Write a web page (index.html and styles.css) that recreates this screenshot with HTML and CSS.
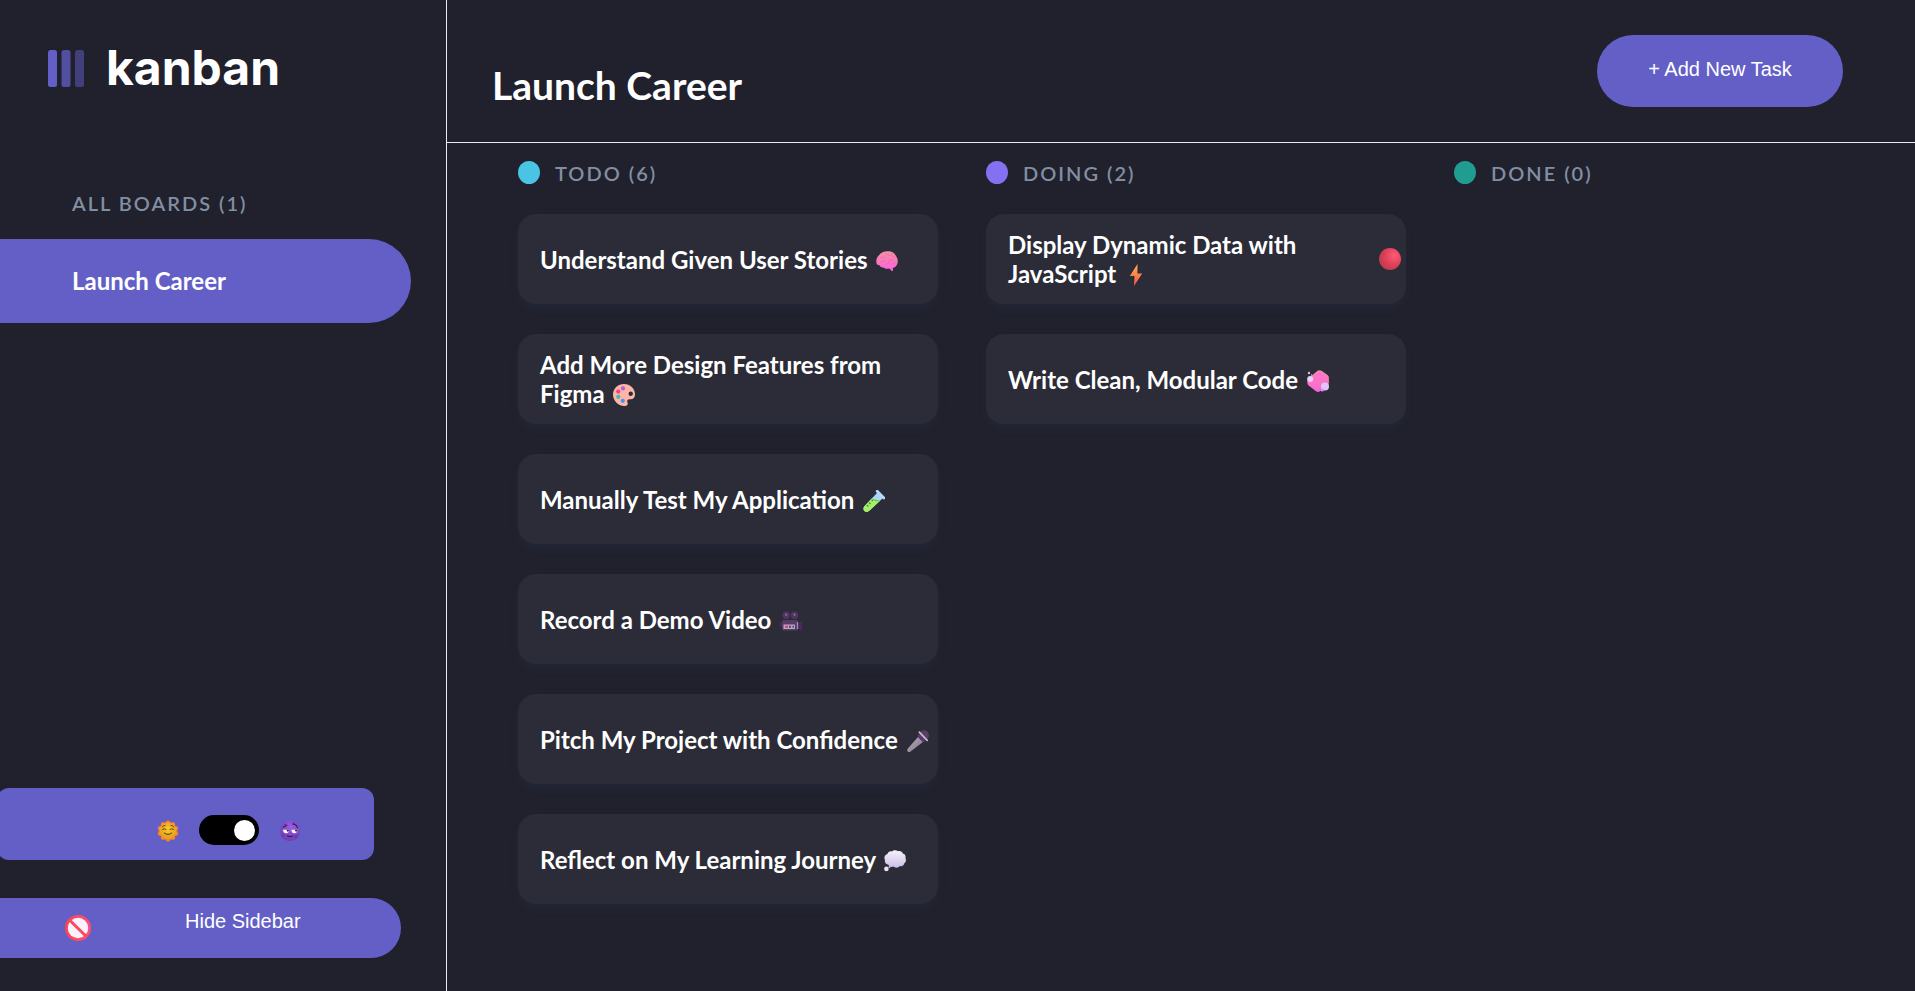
FILE: index.html
```html
<!DOCTYPE html>
<html lang="en">
<head>
<meta charset="utf-8">
<meta name="viewport" content="width=device-width, initial-scale=1">
<title>Kanban - Launch Career</title>
<link rel="stylesheet" href="styles.css">
</head>
<body>
<div class="app">
  <aside class="sidebar">
    <div class="logo">
      <svg class="logo-mark" viewBox="0 0 36 37" aria-hidden="true">
        <g fill="#635fc7">
          <rect width="9" height="37" rx="2.5"/>
          <rect x="13.500" width="9" height="37" rx="2.500" opacity=".75"/>
          <rect x="27" width="9" height="37" rx="2.500" opacity=".5"/>
        </g>
      </svg>
      <span class="logo-text">kanban</span>
    </div>
    <nav class="boards" aria-labelledby="boards-heading">
      <h2 class="label" id="boards-heading">ALL BOARDS (1)</h2>
      <button class="board-btn" type="button">Launch Career</button>
    </nav>
    <div class="sidebar-bottom">
      <div class="theme">
        <svg class="theme-icon" viewBox="0 0 22 22" aria-hidden="true">
          <defs><radialGradient id="sun" cx=".5" cy=".4" r=".6"><stop offset="0" stop-color="#ffc928"/><stop offset="1" stop-color="#e39a18"/></radialGradient></defs>
          <g fill="#ff822d"><circle cx="11" cy="2.800" r="2.400"/><circle cx="15.800" cy="4.300" r="2.400"/><circle cx="18.800" cy="8.400" r="2.400"/><circle cx="18.800" cy="13.500" r="2.400"/><circle cx="15.800" cy="17.600" r="2.400"/><circle cx="11" cy="19.200" r="2.400"/><circle cx="6.200" cy="17.600" r="2.400"/><circle cx="3.200" cy="13.500" r="2.400"/><circle cx="3.200" cy="8.400" r="2.400"/><circle cx="6.200" cy="4.300" r="2.400"/></g>
          <circle cx="11" cy="11" r="8.600" fill="url(#sun)"/>
          <g fill="none" stroke="#493a30" stroke-width="1" stroke-linecap="round"><path d="M5.500 9.500q1.800-1.800 3.600 0M12.900 9.500q1.800-1.800 3.600 0M7.200 13q3.800 3 7.600 0M5.300 6.900q1-1.400 2.700-1.500M14 5.400q1.700.1 2.700 1.500"/></g>
        </svg>
        <label class="switch"><input type="checkbox" checked aria-label="Dark theme"></label>
        <svg class="theme-icon" viewBox="0 0 22 22" aria-hidden="true">
          <defs><radialGradient id="moon" cx=".55" cy=".3" r=".75"><stop offset="0" stop-color="#9b5ce8"/><stop offset="1" stop-color="#6b3cae"/></radialGradient></defs>
          <circle cx="11" cy="11" r="10.200" fill="url(#moon)"/>
          <g fill="#6a3aa8"><circle cx="14.500" cy="3.800" r="1.500"/><circle cx="4" cy="15.500" r="1.600"/><circle cx="17" cy="16.500" r="1.800"/><circle cx="6" cy="5" r="1.200"/></g>
          <path d="M4 9.700h6.200q-.4 3.500-3.100 3.500T4 9.700zM12.300 9.700h6.200q-.4 3.500-3.100 3.500t-3.100-3.500z" fill="#fff"/>
          <path d="M7.700 9.700h2.300q0 2-1.200 2t-1.100-2zM16 9.700h2.300q0 2-1.200 2t-1.100-2z" fill="#35204b"/>
          <path d="M4 7.200q2.200-.3 3.800-2.200M14.500 4q3 .5 4 3.700M8.200 15.800q2.800 1.700 5.600 0" fill="none" stroke="#35204b" stroke-width="1.100" stroke-linecap="round"/>
        </svg>
      </div>
      <button class="hide-btn" type="button">
        <svg class="hide-icon" viewBox="0 0 26 26" aria-hidden="true">
          <defs><linearGradient id="ban" x1="0" x2="1"><stop offset="0" stop-color="#fb4650"/><stop offset="1" stop-color="#ff4e78"/></linearGradient></defs>
          <circle cx="13" cy="13" r="13" fill="url(#ban)"/>
          <circle cx="13" cy="13" r="10.200" fill="#fbf2ff"/>
          <path d="M5 5.500L20.800 21" stroke="#fb4a5b" stroke-width="3"/>
        </svg>
        <span>Hide Sidebar</span>
      </button>
    </div>
  </aside>

  <div class="main">
    <header class="topbar">
      <h1 class="title">Launch Career</h1>
      <button class="add-btn" type="button">+ Add New Task</button>
    </header>
    <main class="columns">
      <section class="column">
        <h2 class="column-head label"><span class="dot dot-todo"></span>TODO (6)</h2>
        <article class="card"><h3 class="card-title">Understand Given User Stories
          <svg class="emoji" viewBox="0 0 22 22" aria-hidden="true">
            <defs><linearGradient id="brain" x1="0" y1="0" x2="0" y2="1"><stop offset="0" stop-color="#f7929d"/><stop offset="1" stop-color="#ff5fe2"/></linearGradient></defs>
            <path d="M1 14.500C-.5 11.500.3 7.600 3 5.200 5 2.500 8.500 1 12 1.300c3.500-.3 6.500 1.700 8 4.700 2.300 3 2.500 7.500-.2 10.200-.9 1.200-2.200 1.700-3 1.700l.2 3h-1.400l-2-2.300c-2.300.5-4.800.4-6.300-1-1.800 0-3-.9-3.500-2.200z" fill="url(#brain)"/>
            <path d="M4.500 7.500q3-2 5.200.5M9.500 3q1 2.800 4.500 2.500M15 3.500q.3 3.200 4 4M5 12q2-2.500 4.500-1M10 14.500q3-.2 3.800-3.200M13 10q3-1.500 5 .5M16 13.500q2 1.500 4-.5" fill="none" stroke="#dd64a4" stroke-width=".6" stroke-linecap="round"/>
          </svg></h3></article>
        <article class="card"><h3 class="card-title">Add More Design Features from Figma
          <svg class="emoji" viewBox="0 0 22 22" aria-hidden="true">
            <path d="M11 0C4.800 0 0 4.700 0 10.500 0 16.600 4.900 22 11.300 22c2.700 0 4.200-1.600 3.200-3.500-1-2 .3-3.500 2.500-3.200 3 .4 5-1.800 5-4.800C22 4.500 17.200 0 11 0z" fill="#ffb5a5"/>
            <circle cx="17.700" cy="9.700" r="2.200" fill="#2b2c37"/><circle cx="10" cy="4.400" r="2.100" fill="#b75ae4"/><circle cx="5.200" cy="7.600" r="2.100" fill="#f3418c"/><circle cx="5.300" cy="12.900" r="2.100" fill="#3dbeb3"/><circle cx="9.800" cy="16.800" r="2.100" fill="#4194f4"/>
          </svg></h3></article>
        <article class="card"><h3 class="card-title">Manually Test My Application
          <svg class="emoji" viewBox="0 0 22 22" aria-hidden="true">
            <path d="M14.500 2.500l5.500 5.500L6.300 20.800c-1.700 1.500-3.600 1.400-4.900.1s-1.300-3.300.2-4.900z" fill="#a9d8f7"/>
            <path d="M8.500 8.700l8.500 2L6.300 20.800c-1.700 1.500-3.600 1.400-4.900.1s-1.300-3.300.2-4.900z" fill="#a8ee62"/>
            <path d="M8.500 8.700l8.500 2q-5 2-8.500-2z" fill="#6dbf55"/>
            <path d="M14.200 1.200l6.700 6.700" stroke="#b9d7fb" stroke-width="2.800" stroke-linecap="round"/>
            <path d="M6 12.500l1.500 1.500M3.800 15l1.500 1.500M8.700 10l1 1" stroke="#319c68" stroke-width="1.500"/>
          </svg></h3></article>
        <article class="card"><h3 class="card-title">Record a Demo Video
          <svg class="emoji" viewBox="0 0 22 22" aria-hidden="true">
            <circle cx="6.200" cy="5.300" r="3.700" fill="#50365f"/><circle cx="14.500" cy="5.300" r="3.700" fill="#50365f"/><circle cx="6.200" cy="4.700" r="1.100" fill="#88739b"/><circle cx="14.500" cy="4.700" r="1.100" fill="#88739b"/>
            <path d="M0 12h2.500v5H0zM17.500 13l4.500-2v10l-4.500-2z" fill="#49285c"/>
            <rect x="2" y="10" width="16" height="10.500" rx="1.500" fill="#553c65"/>
            <rect x="3.500" y="14.500" width="11.500" height="4.500" fill="#b8a5c3"/><path d="M5 15.800h3v2H5z" fill="#e2377f"/><path d="M9 15.800h2v2H9zM12.500 15.800h1.500v2h-1.500z" fill="#5a4268"/><path d="M17.500 12v7" stroke="#a28eb1" stroke-width="1.300"/>
          </svg></h3></article>
        <article class="card"><h3 class="card-title">Pitch My Project with Confidence
          <svg class="emoji" viewBox="0 0 22 22" aria-hidden="true">
            <defs><linearGradient id="mic" x1="0" y1="0" x2="1" y2="1"><stop offset="0" stop-color="#b6adb9"/><stop offset="1" stop-color="#817587"/></linearGradient></defs>
            <path d="M11 7l5 5L3.500 21.400c-1 .8-2.100.8-2.800 0-.7-.7-.6-1.700 0-2.600z" fill="url(#mic)"/>
            <circle cx="17" cy="5.200" r="5" fill="#54405f"/>
            <path d="M10.300 6l6.200 6.500 2-1.200-6.700-7.100z" fill="#5c357a"/>
            <path d="M12.300 2.200l7.900 8.200" stroke="#c6b9cc" stroke-width="1.800" stroke-linecap="round"/>
          </svg></h3></article>
        <article class="card"><h3 class="card-title">Reflect on My Learning Journey
          <svg class="emoji" viewBox="0 0 22 22" aria-hidden="true">
            <defs><linearGradient id="cloud" x1="0" y1="0" x2="0" y2="1"><stop offset="0" stop-color="#f7f2fa"/><stop offset="1" stop-color="#cbbfe5"/></linearGradient></defs>
            <path d="M3.500 4C4 1.900 6.300.8 8 1.500c1.200-1.700 4.500-1.800 6-.3 2-.7 4.300.3 4.800 2.300C21 4 22 6 21.500 8.200c1 1.900.3 4.400-1.300 5.200-.4 2.200-2.600 3.300-4.400 2.600-1.400 1.900-4.800 2.200-6.400.6-1.900.9-4.300 0-5-1.900C2 14.500.4 12.500 1 10-.4 7.800.8 4.500 3.500 4z" fill="url(#cloud)"/>
            <circle cx="2.400" cy="18.900" r="2.300" fill="#e9e1f3"/><circle cx="5.500" cy="16.900" r="1" fill="#cbbfe5"/>
          </svg></h3></article>
      </section>
      <section class="column">
        <h2 class="column-head label"><span class="dot dot-doing"></span>DOING (2)</h2>
        <article class="card"><h3 class="card-title">Display Dynamic Data with JavaScript
          <svg class="emoji" viewBox="0 0 22 22" aria-hidden="true">
            <defs><linearGradient id="bolt" x1="0" y1="0" x2="0" y2="1"><stop offset="0" stop-color="#ffb54a"/><stop offset="1" stop-color="#f0524c"/></linearGradient></defs>
            <path d="M12.500 0L4.800 12h4.700L9 22l8.200-12.500h-4.800z" fill="url(#bolt)"/>
          </svg></h3>
          <svg class="priority" viewBox="0 0 22 22" role="img" aria-label="High priority">
            <defs><radialGradient id="red" cx=".7" cy=".35" r=".75"><stop offset="0" stop-color="#ff5a78"/><stop offset=".6" stop-color="#dd4055"/><stop offset="1" stop-color="#ba3a4d"/></radialGradient></defs>
            <circle cx="11" cy="11" r="11" fill="url(#red)"/>
          </svg></article>
        <article class="card"><h3 class="card-title">Write Clean, Modular Code
          <svg class="emoji" viewBox="0 0 22 22" aria-hidden="true">
            <defs><linearGradient id="soap" x1="0" y1="0" x2="0" y2="1"><stop offset="0" stop-color="#f58da6"/><stop offset="1" stop-color="#ff60e0"/></linearGradient></defs>
            <path d="M10.500.8q2-1.300 4 0L20.500 5q1.500 1.200 1.400 3v4.500q0 2-1.400 3.300L13 21.200q-2 1.400-4 0L1.600 15.500Q0 14 .4 12V9.500z" fill="url(#soap)"/>
            <path d="M11 2.300q1.200-.8 2.500 0L19 6.500q1.200 1 .2 2.200l-8 8.500q-1.200 1-2.500 0L3.500 13q-1.200-1.200-.2-2.500z" fill="#fa75c8"/>
            <circle cx="3.200" cy="9" r="3" fill="#ead0fa"/><circle cx="18" cy="16.500" r="4" fill="#e5c2fa"/><circle cx="15.300" cy="20" r="1.600" fill="#c69df0"/><circle cx="2" cy="3" r="1.200" fill="#dcbcf0"/><circle cx="4.600" cy="5" r=".8" fill="#dcbcf0"/>
          </svg></h3></article>
      </section>
      <section class="column">
        <h2 class="column-head label"><span class="dot dot-done"></span>DONE (0)</h2>
      </section>
    </main>
  </div>
</div>
</body>
</html>
```
FILE: styles.css
```css
* {
  box-sizing: border-box;
}

body {
  margin: 0;
  background: #20212c;
  color: #fff;
  font-family: Lato, "Open Sans", sans-serif;
}

h1,
h2,
h3 {
  margin: 0;
}

button {
  border: 0;
  background: #635fc7;
  color: #fff;
  cursor: pointer;
}

.app {
  display: grid;
  grid-template-columns: 447px 1fr;
  min-height: 100vh;
}

.label {
  color: #828fa3;
  font-size: 20px;
  font-weight: 600;
  line-height: 24px;
  letter-spacing: 2px;
}

/* Sidebar */

.sidebar {
  display: flex;
  flex-direction: column;
  border-right: 1px solid #e4ebfa;
  overflow: hidden;
}

.logo {
  display: flex;
  align-items: center;
  gap: 22px;
  padding: 38px 48px 0;
}

.logo-mark {
  width: 36px;
  height: 37px;
}

.logo-text {
  font-family: Inter, sans-serif;
  font-size: 48px;
  font-weight: 700;
  line-height: 60px;
}

.boards {
  display: flex;
  flex-direction: column;
  gap: 24px;
  padding: 93px 35px 0 0;
}

.boards .label {
  padding-left: 72px;
}

.board-btn {
  height: 84px;
  padding: 0 72px 2px;
  border-radius: 0 42px 42px 0;
  font-family: inherit;
  font-size: 24px;
  font-weight: 700;
  text-align: left;
}

.sidebar-bottom {
  display: flex;
  flex-direction: column;
  gap: 38px;
  margin-top: auto;
  padding-bottom: 33px;
}

.theme {
  display: flex;
  justify-content: center;
  align-items: center;
  gap: 20px;
  height: 72px;
  margin: 0 72px 0 -3px;
  padding: 12px 0 0 86px;
  border-radius: 12px;
  background: #635fc7;
}

.theme-icon {
  width: 22px;
  height: 22px;
  margin-top: 2px;
}

.switch {
  display: flex;
}

.switch input {
  appearance: none;
  display: flex;
  align-items: center;
  width: 60px;
  height: 30px;
  margin: 0;
  padding: 0 4px;
  border-radius: 15px;
  background: #000;
  cursor: pointer;
}

.switch input::before {
  content: "";
  width: 21px;
  height: 21px;
  border-radius: 50%;
  background: #fff;
}

.switch input:checked {
  justify-content: flex-end;
}

.hide-btn {
  display: flex;
  align-items: flex-start;
  gap: 94px;
  height: 60px;
  margin-right: 45px;
  padding: 12px 65px;
  border-radius: 0 30px 30px 0;
  font-family: "Liberation Sans", Arial, sans-serif;
  font-size: 20px;
  line-height: 22px;
}

.hide-icon {
  align-self: center;
  width: 26px;
  height: 26px;
}

/* Main area */

.topbar {
  display: flex;
  justify-content: space-between;
  align-items: flex-start;
  height: 143px;
  padding: 35px 72px 0 45px;
  border-bottom: 1px solid #e4ebfa;
}

.title {
  padding-top: 26px;
  font-size: 39px;
  font-weight: 700;
  line-height: 48px;
}

.add-btn {
  width: 246px;
  height: 72px;
  padding: 0 0 3px;
  border-radius: 36px;
  font-family: "Liberation Sans", Arial, sans-serif;
  font-size: 20px;
}

.columns {
  display: grid;
  grid-template-columns: repeat(3, 1fr);
  gap: 48px;
  padding: 18px 41px 48px 71px;
}

.column {
  display: flex;
  flex-direction: column;
  gap: 30px;
}

.column-head {
  display: flex;
  align-items: center;
  gap: 15px;
  height: 23px;
}

.dot {
  width: 22px;
  height: 23px;
  border-radius: 50%;
}

.dot-todo {
  background: #49c4e5;
}

.dot-doing {
  background: #8471f2;
}

.dot-done {
  background: #219c90;
}

.card {
  display: flex;
  align-items: center;
  min-height: 90px;
  padding: 0 5px 0 22px;
  border-radius: 18px;
  background: #2b2c37;
  box-shadow: 0 6px 9px rgba(54, 78, 126, 0.1);
}

.card-title {
  flex: 1;
  font-size: 24px;
  font-weight: 700;
  line-height: 29px;
}

.emoji {
  width: 22px;
  height: 22px;
  margin-left: 3px;
  vertical-align: -3px;
}

.priority {
  flex: none;
  width: 22px;
  height: 22px;
}
```
